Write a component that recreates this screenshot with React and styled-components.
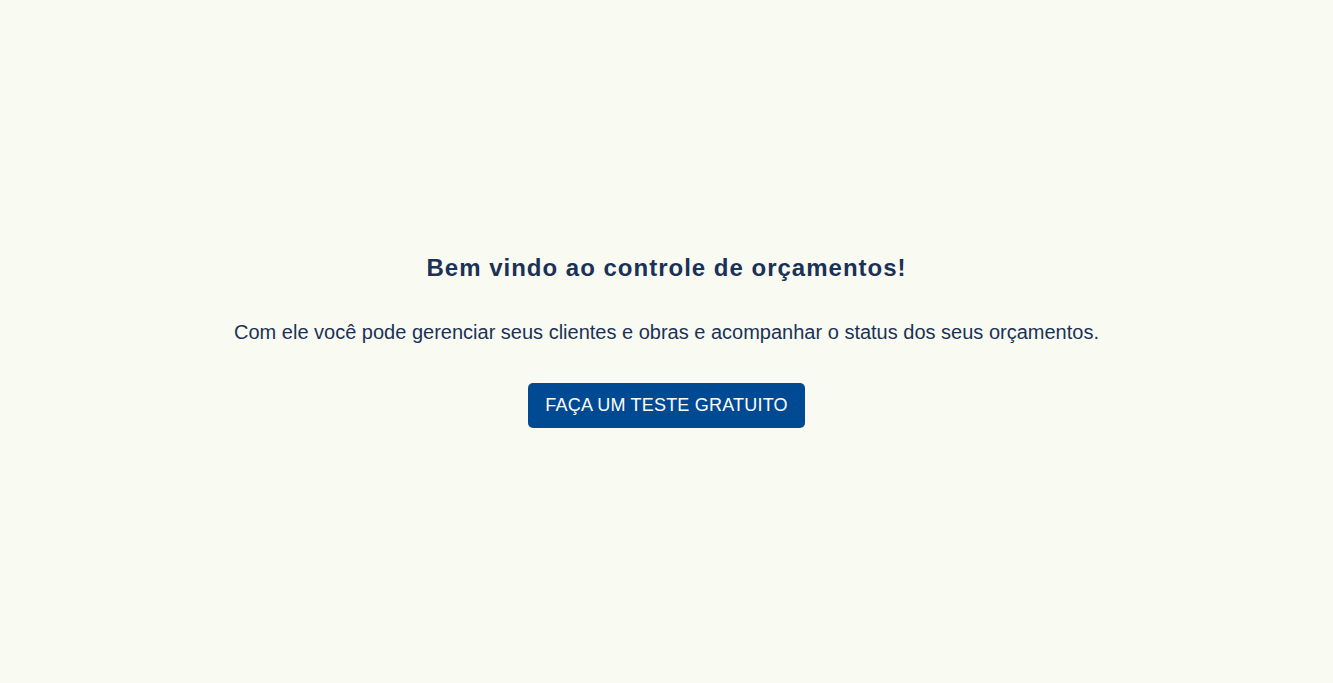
import React from "react";
import styled, { createGlobalStyle } from "styled-components";

const Global = createGlobalStyle`
  html, body { margin: 0; padding: 0; }
  body { background: #f9fbf3; font-family: "Liberation Sans", Arial, sans-serif; }
`;

const Page = styled.main`
  box-sizing: border-box;
  min-height: 683px;
  padding-bottom: 2px;
  display: flex;
  flex-direction: column;
  align-items: center;
  justify-content: center;
  text-align: center;
  color: #1b3256;
`;

const Title = styled.h1`
  margin: 0;
  font-size: 24px;
  font-weight: 700;
  letter-spacing: 1px;
  line-height: 28px;
`;

const Lead = styled.p`
  margin: 38px 0 0;
  font-size: 20px;
  line-height: 24px;
`;

const Cta = styled.button`
  margin-top: 39px;
  height: 45px;
  padding: 0 17.5px;
  border: none;
  border-radius: 5px;
  background: #004a94;
  color: #ffffff;
  font-family: "Liberation Sans", Arial, sans-serif;
  font-size: 18px;
  letter-spacing: 0.2px;
  cursor: pointer;
`;

export default function App() {
  return (
    <>
      <Global />
      <Page>
        <Title>Bem vindo ao controle de orçamentos!</Title>
        <Lead>Com ele você pode gerenciar seus clientes e obras e acompanhar o status dos seus orçamentos.</Lead>
        <Cta>FAÇA UM TESTE GRATUITO</Cta>
      </Page>
    </>
  );
}
